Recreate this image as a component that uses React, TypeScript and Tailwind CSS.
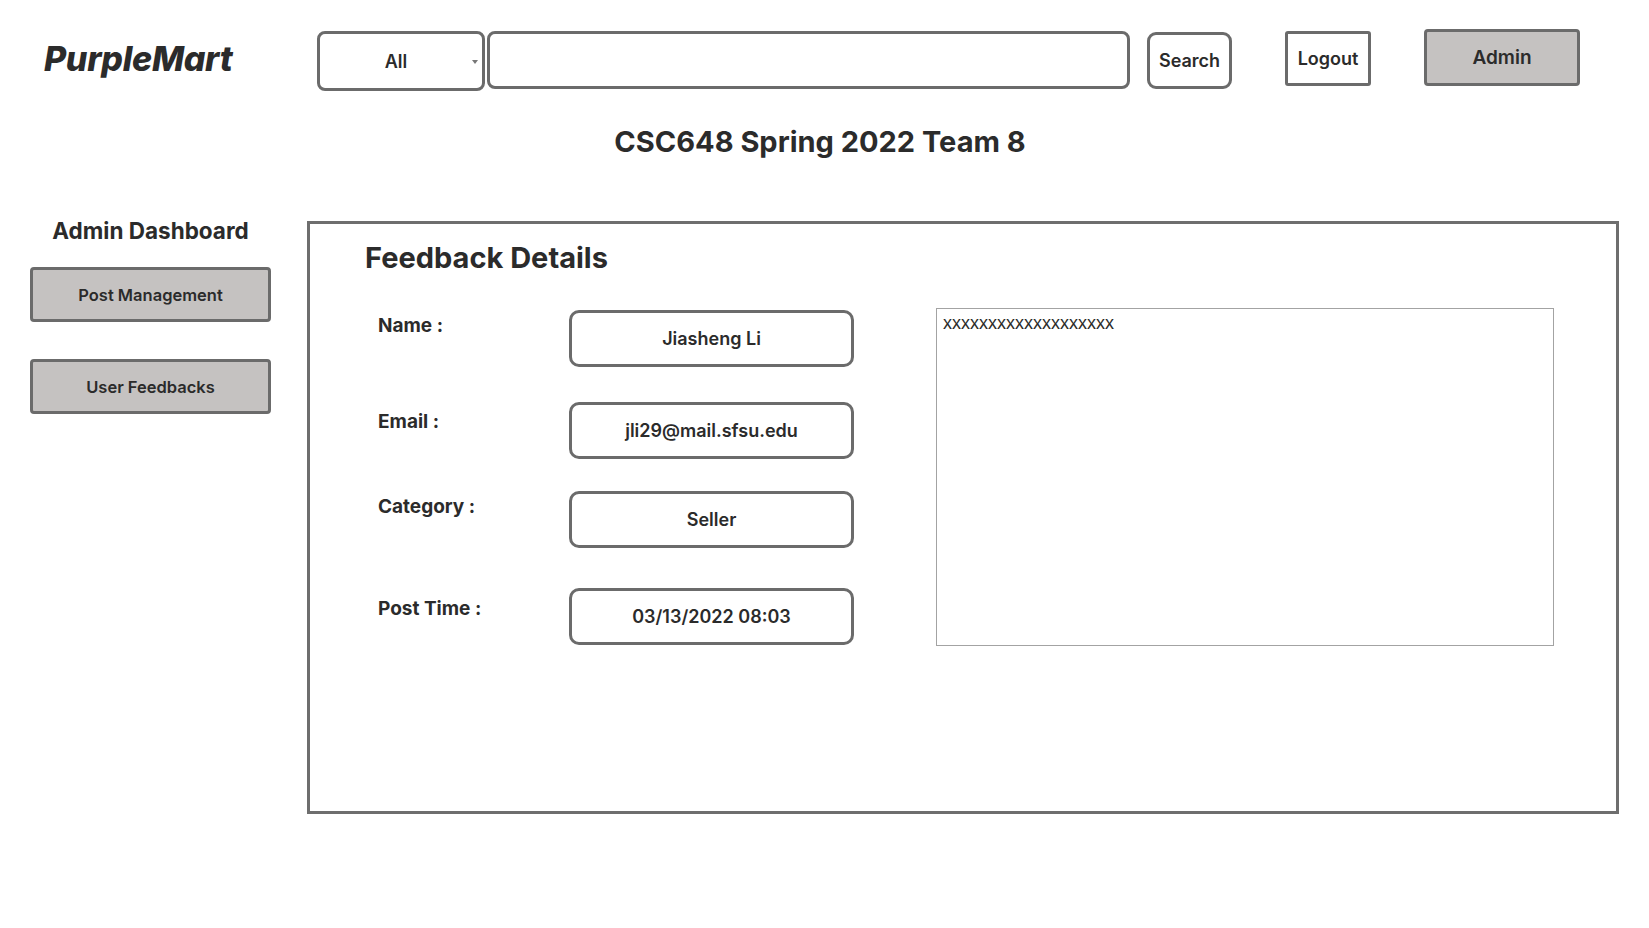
import React from "react";

const Box = ({ children }: { children: React.ReactNode }) => (
  <div className="w-[285px] h-[57px] border-[3px] border-[#6b6b6b] rounded-[10px] flex items-center justify-center text-[18px] font-semibold text-[#2b2b2b]">
    {children}
  </div>
);

const Row = ({ label, value, mt, lt }: { label: string; value: string; mt: string; lt: string }) => (
  <div className={`flex items-start ${mt}`}>
    <div className={`w-[191px] ${lt} text-[19px] leading-[24px] font-bold text-[#2b2b2b]`}>{label}</div>
    <Box>{value}</Box>
  </div>
);

export default function App() {
  return (
    <div className="w-[1649px] h-[928px] bg-white font-['Inter','Noto_Sans',sans-serif] text-[#2b2b2b] overflow-hidden">
      {/* Header */}
      <div className="flex items-start pt-[29px] pl-[44px]">
        <div className="w-[273px] mt-[10px] text-[34px] leading-[40px] font-extrabold italic tracking-[-0.3px]">PurpleMart</div>
        <div className="relative mt-[2px] w-[168px] h-[60px] border-[3px] border-[#6b6b6b] rounded-[8px] flex items-center justify-center pr-[10px] text-[18px] font-semibold">
          All
          <svg className="absolute right-[4px] top-[26px]" width="6" height="4" viewBox="0 0 6 4">
            <polygon points="0,0 6,0 3,4" fill="#777" />
          </svg>
        </div>
        <div className="ml-[2px] mt-[2px] w-[643px] h-[58px] border-[3px] border-[#6b6b6b] rounded-[8px]" />
        <div className="ml-[17px] mt-[3px] w-[85px] h-[57px] border-[3px] border-[#6b6b6b] rounded-[9px] flex items-center justify-center text-[18px] font-semibold">
          Search
        </div>
        <div className="ml-[53px] mt-[2px] w-[86px] h-[55px] border-[3px] border-[#6b6b6b] rounded-[3px] flex items-center justify-center text-[18px] font-semibold">
          Logout
        </div>
        <div className="ml-[53px] w-[156px] h-[57px] border-[3px] border-[#6b6b6b] rounded-[4px] bg-[#c5c2c1] flex items-center justify-center pt-[2px] text-[19px] font-semibold">
          Admin
        </div>
      </div>

      {/* Title */}
      <div className="mt-[33px] flex justify-center pr-[9px] text-[29px] leading-[35px] font-bold">
        CSC648 Spring 2022 Team 8
      </div>

      {/* Body */}
      <div className="mt-[55px] flex items-start">
        <div className="w-[307px] flex flex-col items-start">
          <div className="w-[301px] mt-[2px] text-center text-[22.5px] leading-[29px] font-bold">Admin Dashboard</div>
          <div className="ml-[30px] mt-[22px] w-[241px] h-[55px] border-[3px] border-[#6b6b6b] rounded-[4px] bg-[#c5c2c1] flex items-center justify-center pt-[1px] text-[16.5px] font-semibold">
            Post Management
          </div>
          <div className="ml-[30px] mt-[37px] w-[241px] h-[55px] border-[3px] border-[#6b6b6b] rounded-[4px] bg-[#c5c2c1] flex items-center justify-center pt-[1px] text-[16.5px] font-semibold">
            User Feedbacks
          </div>
        </div>

        <div className="mt-[7px] w-[1312px] h-[593px] border-[3px] border-[#6e6e6e] pt-[17px] pl-[55px]">
          <div className="text-[29px] leading-[34px] font-bold">Feedback Details</div>
          <div className="flex items-start mt-[35px] ml-[13px]">
            <div className="flex flex-col">
              <Row label="Name :" value="Jiasheng Li" mt="mt-0" lt="mt-[4px]" />
              <Row label="Email :" value="jli29@mail.sfsu.edu" mt="mt-[35px]" lt="mt-[8px]" />
              <Row label="Category :" value="Seller" mt="mt-[32px]" lt="mt-[4px]" />
              <Row label="Post Time :" value="03/13/2022 08:03" mt="mt-[40px]" lt="mt-[9px]" />
            </div>
            <div className="ml-[82px] -mt-[2px] w-[618px] h-[338px] border border-[#a3a3a3] pl-[6px] pt-[4px] font-['Liberation_Sans',Arial,sans-serif] text-[18px] leading-[21px] text-[#2b2b2b]">
              xxxxxxxxxxxxxxxxxxx
            </div>
          </div>
        </div>
      </div>
    </div>
  );
}
